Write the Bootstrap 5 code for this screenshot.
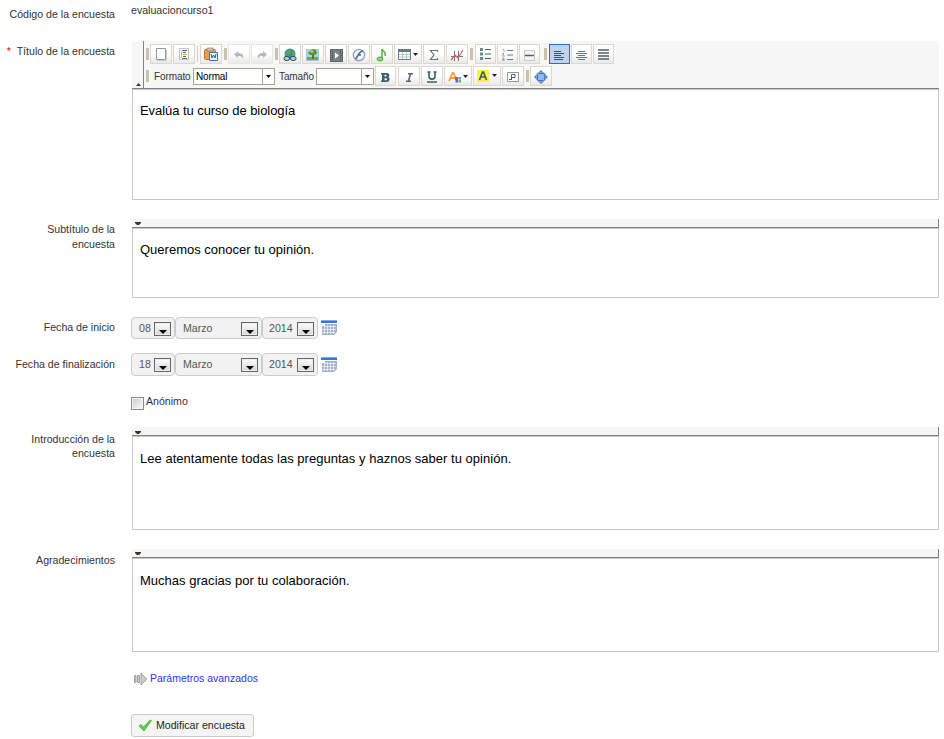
<!DOCTYPE html>
<html lang="es">
<head>
<meta charset="utf-8">
<meta name="viewport" content="width=device-width, initial-scale=1">
<title>Modificar encuesta</title>
<link href="https://cdn.jsdelivr.net/npm/bootstrap@5.3.0/dist/css/bootstrap.min.css" rel="stylesheet">
<style>
body{font:10.6px/15px "Liberation Sans",Arial,sans-serif;color:#333;height:739px;overflow:hidden}
svg{display:block;flex:none}
.frow{gap:16px}
.r-code{height:41px}.r-title{height:178px}.r-sub{height:98px}.r-start{height:36px}.r-end{height:42px}.r-anon{height:32px}.r-text{height:122px}.r-adv{height:43px}
.lbl{width:115px;flex:none;text-align:right;padding-top:3px}
.r-code .lbl{padding-top:7px}
.r-code .val{padding-top:3px}
.r-end .lbl,.r-text .lbl{padding-top:4px}
.r-intro .lbl{line-height:14px;padding-top:5px}
.req{color:#e00}
.field-box{width:808px;flex:none}
.ed{margin-left:1px;width:807px}
.ed-area{border:1px solid #c8c8c8;color:#000;font-size:13px;line-height:16px;padding:13px 7px}
.r-title .ed-area{height:111px;letter-spacing:-.06px}
.r-sub .ed-area{height:70px}
.r-text .ed-area{height:94px;padding-top:14px;letter-spacing:.02px}
.strip{height:9px;background:#f6f6f6;border-bottom:1px solid #82827a;border-right:1px solid #82827a;padding:3px 0 0 3px}
.r-intro .strip{padding-top:4px}
.tools{height:48px;background:#f7f7f7;border-bottom:1px solid #82827a}
.tool-rows{padding-top:3px;gap:2px}
.collapse-bar{width:12px;border-right:1px solid #82827a;padding:0 0 2px 4px}
.trow{gap:1px;padding-left:2px;height:20px}
.grip{width:3px;height:12px;background:#c6c2ac;flex:none}
.tb{width:22px;height:20px;border:1px solid #dcd9ca;background:linear-gradient(#fff 45%,#e9e9ea);flex:none;display:flex;align-items:center;justify-content:center}
.tb.n{width:21px}.tb.w{width:28px}
.tb.low{padding-top:2px}
.tb.on{background:#c1d2ee;border-color:#316ac5}
.tb.off{border-color:#e9e7df}.tb.off svg{opacity:.5}
.ml1{margin-left:1px}.ml3{margin-left:3px}.mr1{margin-right:1px}
.vline{width:1px;height:16px;background:#d3d1c7;margin:0 1px}
.tname{font-size:10px;letter-spacing:-.1px;width:38px;margin-left:4px}
.tname.size{width:36px;margin-left:3px}
.tsel{width:82px;height:17px;border:1px solid #a5a591;background:#fff;color:#000;font-size:10px;line-height:15px;letter-spacing:-.15px}
.tsel.short{width:58px}
.tsel span{flex:1;padding-left:2px}
.tsel i{width:12px;border-left:1px solid #a5a591;display:flex;align-items:center;justify-content:center}
.dsel{height:23px;border:1px solid #ccc;border-radius:4px;background:#f2f2f2;color:#555;padding:0 3px 0 7px}
.dsel.day{width:44px}.dsel.month{width:87px}.dsel.year{width:56px;padding-left:6px}
.r-start .dsel{height:22px}
.dd{width:17px;height:14px;border:1px solid #666;background:linear-gradient(#fff,#d4d4d4);box-shadow:inset 0 0 0 1px #eee;display:flex;align-items:flex-end;justify-content:center;margin-top:1px;padding-bottom:1px}
.cal{margin:3px 0 0 3px}
.r-end .cal{margin-top:4px}
.ck{width:13px;height:13px;border:1px solid #8b8b8b;background:linear-gradient(135deg,#c5c8cc,#fff);box-shadow:inset 0 0 0 1px #f4f4f4;margin:2px 2px 0 0}
.ck-text{margin-top:-1px}
.adv{color:#33e;text-decoration:none;font-size:10.5px}
.adv-icon{margin:1px 2px 0 3px}
.save{height:23px;width:123px;white-space:nowrap;border:1px solid #ccc;border-radius:3px;background:#f5f5f5;color:#222;font-size:10.6px;line-height:15px;padding:0 6px;gap:4px}
</style>
</head>
<body class="bg-white">
<svg width="0" height="0" class="position-absolute">
<symbol id="down" viewBox="0 0 6 3"><path d="M0 0h6v1L4 3H2L0 1z" fill="#3b352b"/></symbol>
<symbol id="caret" viewBox="0 0 5 3"><path d="M0 0h5L2.500 3z"/></symbol>
<symbol id="arr" viewBox="0 0 8 4"><path d="M0 0h8L4 4z"/></symbol>
<symbol id="cal" viewBox="0 0 16 15"><path fill="#2f78e0" d="M0 0h16v3H0z"/><path fill="#77acf1" d="M0 0h16v1H0z"/><path fill="#a3b0ca" d="M4 4h12v8l-3 3H1V6h3z"/><path d="M4 6.500h11M1 9.500h14M1 12.500h13M3.500 6v8M6.500 5v9M9.500 5v9M12.500 5v9" stroke="#eef2f8" stroke-width=".8"/></symbol>
</svg>
<form class="d-flex flex-column">
  <div class="frow r-code d-flex"><div class="lbl">Código de la encuesta</div><div class="val">evaluacioncurso1</div></div>

  <div class="frow r-title d-flex"><div class="lbl"><span class="req">*</span>&nbsp; Título de la encuesta</div>
    <div class="field-box"><div class="ed">
      <div class="tools d-flex">
        <div class="collapse-bar d-flex align-items-end"><svg width="5" height="3"><path d="M0 3h5L2.500 0z" fill="#3b352b"/></svg></div>
        <div class="tool-rows d-flex flex-column">
          <div class="trow d-flex align-items-center">
            <span class="grip"></span>
            <span class="tb"><svg width="12" height="14"><path d="M1.500 1.500h9v11h-9z" fill="#fff" stroke="#8d9a9d"/><path d="M2 13.500h9.500V3" fill="none" stroke="#c4cccc"/></svg></span>
            <span class="tb"><svg width="12" height="14"><path d="M1.500 1.500h9v11h-9z" fill="#fff" stroke="#c0c5c6"/><path d="M4 3.500h5M5 5.500h3M5 9.500h3M4 11.500h5" stroke="#526b73"/><path d="M5 7.500h4" stroke="#e5a238"/><path d="M3.500 4v7" stroke="#e5b566"/></svg></span>
            <span class="vline"></span>
            <span class="tb"><svg width="14" height="14"><rect x=".5" y="2.500" width="11" height="10" rx="1" fill="#e9a04c" stroke="#c17b34"/><path d="M3 1h6v3H3z" fill="#d6c4a6" stroke="#a66b34" stroke-width=".6"/><path d="M5.500 5.500h8v8h-8z" fill="#edf4ff" stroke="#4670b6"/><path d="M7 7l1 4 1.500-3L11 11l1-4" fill="none" stroke="#2857a5"/></svg></span>
            <span class="grip ml1"></span>
            <span class="tb off low"><svg width="12" height="10"><path d="M1 4.500L5 1v2c4 0 6 2 5 6C9 6 8 6 5 6v2z" fill="#667b83"/></svg></span>
            <span class="tb off low"><svg width="12" height="10"><path d="M11 4.500L7 1v2C3 3 1 5 2 9c1-3 2-3 5-3v2z" fill="#667b83"/></svg></span>
            <span class="grip ml1"></span>
            <span class="tb low"><svg width="14" height="14"><circle cx="7" cy="6" r="5.500" fill="#3f83c6"/><path d="M3 3l4-2 1 3-2 3-4 1zM9 3l3 1v5l-3-1z" fill="#54a653"/><rect x="1" y="8.500" width="5.500" height="4" rx="2" fill="#b4cbcd" stroke="#244d58"/><rect x="7.500" y="8.500" width="5.500" height="4" rx="2" fill="#b4cbcd" stroke="#244d58"/></svg></span>
            <span class="tb low"><svg width="14" height="14"><path d="M.5 1.500h12v11H.5z" fill="#a7d4ee" stroke="#a7c4cb"/><path d="M1 9h11v3H1z" fill="#69ad46"/><path d="M6 6h2v5H6z" fill="#855b32"/><path d="M4 3l3-2 3 1 1 3-2 2H4L2 5z" fill="#4d9a32"/><circle cx="6" cy="3.500" r="1.500" fill="#b8cf51"/></svg></span>
            <span class="tb low"><svg width="13" height="13"><path d="M0 0h13v13H0z" fill="#5e6468"/><path d="M3 1h7v11H3z" fill="#7b8286"/><path d="M1.500 1v11M11.500 1v11" stroke="#8d9497" stroke-dasharray="1 1"/><path d="M5 3.500v6l4-3z" fill="#fff"/></svg></span>
            <span class="tb low"><svg width="14" height="14"><circle cx="7" cy="7" r="5.700" fill="#edf3f7" stroke="#8fa2b6" stroke-width="1.300"/><path d="M11 3C7 3 7 7 3.500 11M6 7h3" fill="none" stroke="#516c89" stroke-width="1.600"/></svg></span>
            <span class="tb low"><svg width="12" height="14"><path d="M6 11V1c1 3 5 3 3 7" fill="none" stroke="#5bb550" stroke-width="1.600"/><ellipse cx="4" cy="11" rx="3" ry="2" fill="#8ed580" stroke="#4baa42"/></svg></span>
            <span class="tb w low"><svg width="20" height="12"><path d="M.5.500h12v10H.5z" fill="#fff" stroke="#657b87"/><path d="M0 0h13v3H0z" fill="#657b87"/><path d="M1 5.500h11M1 8h11M4.500 3v7M8.500 3v7" stroke="#b8c8ca"/><path d="M15 4h5l-2.500 3z" fill="#222"/></svg></span>
            <span class="tb low"><svg width="10" height="12"><path d="M8.500 3V1.500h-7L5 6l-3.500 4.500h7V9" fill="none" stroke="#667579" stroke-width="1.200"/></svg></span>
            <span class="tb low"><svg width="14" height="13"><path d="M1 7.500h12M4.500 2v10M8.500 2v10" stroke="#687b83"/><path d="M1 11l4-5 3 3 5-8" fill="none" stroke="#e26363" stroke-width="1.300"/></svg></span>
            <span class="grip ml1 mr1"></span>
            <span class="tb n"><svg width="12" height="12"><path d="M0 0h3v3H0zM0 4.500h3v3H0zM0 9h3v3H0z" fill="#6a8990"/><path d="M5 1.500h6M5 6h6M5 10.500h6" stroke="#45616b"/></svg></span>
            <span class="tb n low"><svg width="12" height="12"><path d="M1 .5h1V3M0 4.500h2L.5 7H3M0 9h2v3H0m0-1.500h2" fill="none" stroke="#83989c" stroke-width=".8"/><path d="M5 1.500h6M5 6h6M5 10.500h6" stroke="#637b81"/></svg></span>
            <span class="tb n low"><svg width="12" height="11"><path d="M.5.500h10v10H.5z" fill="#f5f5f5" stroke="#c5c8c9"/><path d="M1 5.500h9" stroke="#516369" stroke-width="1.500"/></svg></span>
            <span class="grip ml3 mr1"></span>
            <span class="tb n on low"><svg width="11" height="11"><path d="M0 1.500h7M0 3.500h10M0 5.500h7M0 7.500h10M0 9.500h9" stroke="#355767" stroke-width="1.200"/></svg></span>
            <span class="tb n low"><svg width="11" height="11"><path d="M2 1.500h7M0 3.500h11M2 5.500h7M0 7.500h11M2 9.500h7" stroke="#66777d"/></svg></span>
            <span class="tb n"><svg width="11" height="11"><path d="M0 1h11M0 4h11M0 7h11M0 10h11" stroke="#4c5e64" stroke-width="1.300"/></svg></span>
          </div>
          <div class="trow d-flex align-items-center">
            <span class="grip"></span>
            <span class="tname">Formato</span>
            <span class="tsel d-flex"><span>Normal</span><i><svg width="5" height="3"><use href="#caret"/></svg></i></span>
            <span class="tname size">Tamaño</span>
            <span class="tsel short d-flex"><span></span><i><svg width="5" height="3"><use href="#caret"/></svg></i></span>
            <span class="tb n low"><svg width="9" height="9"><path fill-rule="evenodd" d="M0 0h5.500C9 0 9 3.500 7.300 4.200 9.500 5 9 9 5.500 9H0V7.500h1v-6H0zM3.500 1.700v1.800h1.300c1.200 0 1.200-1.800 0-1.800zM3.500 5.200v2h1.500c1.400 0 1.400-2 0-2z" fill="#38606a"/></svg></span>
            <span class="tb low ml1"><svg width="9" height="9"><path d="M3 .7h5M1 8.300h5M5.500 1l-2 7" stroke="#53666d" stroke-width="1.500"/></svg></span>
            <span class="tb low"><svg width="10" height="12"><path d="M2 1v4.500c0 3.500 6 3.500 6 0V1M.5 1h3M6.500 1h3M0 11h10" fill="none" stroke="#38616a" stroke-width="1.600"/></svg></span>
            <span class="tb w low"><svg width="20" height="12"><path d="M1 10l3.500-8h1L9 10M3 7h4" fill="none" stroke="#eda13b" stroke-width="1.800"/><path d="M7 6h3v3H7z" fill="#d44"/><path d="M10.500 6h2.500v2.500h-2.500z" fill="#579bdb"/><path d="M7.500 9h2.500v2.500H7.500z" fill="#5b65d0"/><path d="M10.500 9h2.500v2.500h-2.500z" fill="#65b750"/><path d="M15 4h5l-2.500 3z" fill="#222"/></svg></span>
            <span class="tb w"><svg width="20" height="12"><path d="M0 0h12v12H0z" fill="#faf246"/><path d="M2.500 10L5.500 2h1l3 8M4 7h4" fill="none" stroke="#475d50" stroke-width="1.700"/><path d="M15 4h5l-2.500 3z" fill="#222"/></svg></span>
            <span class="tb low"><svg width="12" height="10"><path d="M.5.500h11v9H.5z" fill="#fff" stroke="#8b9da2"/><path d="M4.500 8V2.500h3.500v3H5M2 7.500h3" fill="none" stroke="#4c646d"/></svg></span>
            <span class="grip ml1"></span>
            <span class="tb low"><svg width="14" height="14"><path d="M7 0l3 3H4zM7 14l3-3H4zM0 7l3-3v6zM14 7l-3-3v6z" fill="#5f7f9b"/><circle cx="7" cy="7" r="5.200" fill="#87a3bb"/><rect x="3.500" y="3.500" width="7" height="7" rx="1" fill="#8ab9ff" stroke="#3978d8"/></svg></span>
          </div>
        </div>
      </div>
      <div class="ed-area">Evalúa tu curso de biología</div>
    </div></div>
  </div>

  <div class="frow r-sub d-flex"><div class="lbl">Subtítulo de la<br>encuesta</div>
    <div class="field-box"><div class="ed"><div class="strip"><svg width="6" height="3"><use href="#down"/></svg></div><div class="ed-area">Queremos conocer tu opinión.</div></div></div></div>

  <div class="frow r-start d-flex align-items-start"><div class="lbl">Fecha de inicio</div>
    <div class="d-flex">
      <div class="dsel day d-flex align-items-center justify-content-between"><span>08</span><span class="dd"><svg width="8" height="4"><use href="#arr"/></svg></span></div>
      <div class="dsel month d-flex align-items-center justify-content-between"><span>Marzo</span><span class="dd"><svg width="8" height="4"><use href="#arr"/></svg></span></div>
      <div class="dsel year d-flex align-items-center justify-content-between"><span>2014</span><span class="dd"><svg width="8" height="4"><use href="#arr"/></svg></span></div>
      <svg class="cal" width="16" height="15"><use href="#cal"/></svg>
    </div></div>
  <div class="frow r-end d-flex align-items-start"><div class="lbl">Fecha de finalización</div>
    <div class="d-flex">
      <div class="dsel day d-flex align-items-center justify-content-between"><span>18</span><span class="dd"><svg width="8" height="4"><use href="#arr"/></svg></span></div>
      <div class="dsel month d-flex align-items-center justify-content-between"><span>Marzo</span><span class="dd"><svg width="8" height="4"><use href="#arr"/></svg></span></div>
      <div class="dsel year d-flex align-items-center justify-content-between"><span>2014</span><span class="dd"><svg width="8" height="4"><use href="#arr"/></svg></span></div>
      <svg class="cal" width="16" height="15"><use href="#cal"/></svg>
    </div></div>
  <div class="frow r-anon d-flex"><div class="lbl"></div><div class="d-flex align-items-start"><span class="ck"></span><span class="ck-text">Anónimo</span></div></div>

  <div class="frow r-text r-intro d-flex"><div class="lbl">Introducción de la<br>encuesta</div>
    <div class="field-box"><div class="ed"><div class="strip"><svg width="6" height="3"><use href="#down"/></svg></div><div class="ed-area">Lee atentamente todas las preguntas y haznos saber tu opinión.</div></div></div></div>
  <div class="frow r-text d-flex"><div class="lbl">Agradecimientos</div>
    <div class="field-box"><div class="ed"><div class="strip"><svg width="6" height="3"><use href="#down"/></svg></div><div class="ed-area">Muchas gracias por tu colaboración.</div></div></div></div>

  <div class="frow r-adv d-flex"><div class="lbl"></div><div class="d-flex align-items-start"><svg class="adv-icon" width="14" height="14"><path d="M.5 3.500h1.500v7H.5zM3.500 3.500H5.500v7h-2zM7 3.500V1l5.800 6L7 13v-2.500z" fill="#ccc" stroke="#999" stroke-width=".9"/></svg><a class="adv" href="#">Parámetros avanzados</a></div></div>
  <div class="frow d-flex"><div class="lbl"></div><button type="button" class="save btn d-flex align-items-center"><svg width="14" height="13"><path d="M1 7l2-1.500L5.500 8 12 1l1.500.500L6 12z" fill="#5fcf4c" stroke="#4db245" stroke-width=".8"/></svg>Modificar encuesta</button></div>
</form>
<script src="https://cdn.jsdelivr.net/npm/bootstrap@5.3.0/dist/js/bootstrap.bundle.min.js"></script>
</body>
</html>
